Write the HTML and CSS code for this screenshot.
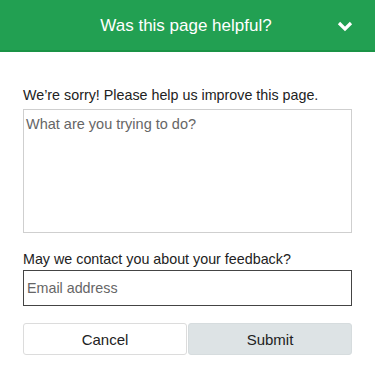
FILE: index.html
```html
<!DOCTYPE html>
<html>
<head>
<meta charset="utf-8">
<link rel="stylesheet" href="styles.css">
</head>
<body>
<div class="header">
  <span class="title">Was this page helpful?</span>
  <svg class="chev" width="16" height="12" viewBox="0 0 16 12"><path d="M2 3 L8 9 L14 3" fill="none" stroke="#fff" stroke-width="3.2"/></svg>
</div>
<form class="form">
  <label class="label">We’re sorry! Please help us improve this page.</label>
  <textarea class="area" placeholder="What are you trying to do?"></textarea>
  <label class="label label2">May we contact you about your feedback?</label>
  <input class="email" type="text" placeholder="Email address">
  <div class="buttons">
    <button type="button" class="btn cancel">Cancel</button>
    <button type="button" class="btn submit">Submit</button>
  </div>
</form>
</body>
</html>
```

FILE: styles.css
```css
html, body {
  margin: 0;
  padding: 0;
  background: #fff;
  font-family: "Liberation Sans", Arial, sans-serif;
}
.header {
  height: 50px;
  background: #22a052;
  border-bottom: 2px solid #1a9346;
  display: flex;
  align-items: center;
  justify-content: center;
  position: relative;
}
.title {
  color: #fff;
  font-size: 17px;
  margin-left: -3px;
  margin-top: 1px;
}
.chev {
  position: absolute;
  right: 22px;
  top: 20px;
}
.form {
  padding: 34px 23px 0 23px;
  display: flex;
  flex-direction: column;
}
.label {
  font-size: 14.3px;
  color: #222;
  line-height: 18px;
  margin-bottom: 5px;
}
.label2 {
  margin-top: 17px;
  margin-bottom: 2px;
}
.area {
  box-sizing: border-box;
  height: 124px;
  border: 1px solid #cfcfcf;
  font-family: inherit;
  font-size: 14.5px;
  padding: 6px 2px;
  resize: none;
  margin: 0;
  outline: none;
}
.area::placeholder, .email::placeholder {
  color: #666;
}
.email {
  box-sizing: border-box;
  height: 36px;
  border: 1px solid #444;
  border-width: 1.5px;
  font-family: inherit;
  font-size: 14.3px;
  padding: 0 3px;
  margin: 0;
  outline: none;
}
.buttons {
  display: flex;
  gap: 1px;
  margin-top: 17px;
}
.btn {
  flex: 1;
  height: 32px;
  box-sizing: border-box;
  border-radius: 3px;
  font-family: inherit;
  font-size: 15px;
  color: #222;
  border: 1px solid #dcdcdc;
  background: #fff;
  padding: 0;
}
.submit {
  background: #dde3e5;
  border-color: #d6dcde;
}
```
